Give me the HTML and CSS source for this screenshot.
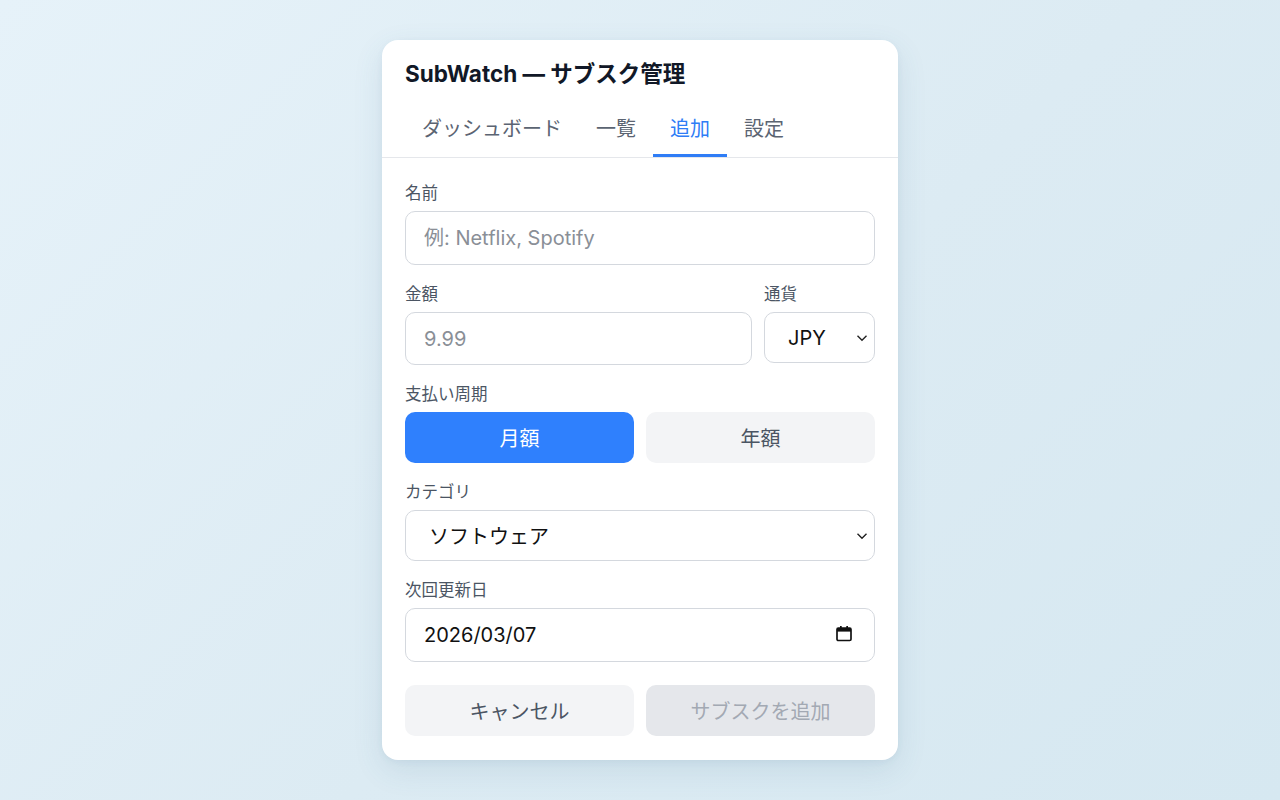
FILE: index.html
```html
<!DOCTYPE html>
<html lang="ja">
<head>
    <meta charset="UTF-8">
    <meta name="viewport" content="width=device-width, initial-scale=1.0">
    <title>SubWatch</title>
    <link rel="stylesheet" href="styles.css">
</head>
<body>
    <div class="card">
        <div class="head">
            <h1 class="title">SubWatch — サブスク管理</h1>
            <div class="tabs">
                <span class="tab">ダッシュボード</span>
                <span class="tab">一覧</span>
                <span class="tab active">追加</span>
                <span class="tab">設定</span>
            </div>
        </div>

        <form class="form">
            <div class="field">
                <label class="label">名前</label>
                <input class="input" type="text" placeholder="例: Netflix, Spotify">
            </div>

            <div class="row">
                <div class="field grow">
                    <label class="label">金額</label>
                    <input class="input" type="text" placeholder="9.99">
                </div>
                <div class="field currency">
                    <label class="label">通貨</label>
                    <div class="select-wrap">
                        <div class="select small">JPY</div>
                        <svg class="chev" width="12" height="8" viewBox="0 0 12 8"><path d="M1.5 1.8 6 6.2l4.5-4.4" fill="none" stroke="#222" stroke-width="1.4"/></svg>
                    </div>
                </div>
            </div>

            <div class="field">
                <label class="label">支払い周期</label>
                <div class="toggle">
                    <button type="button" class="tbtn on">月額</button>
                    <button type="button" class="tbtn">年額</button>
                </div>
            </div>

            <div class="field">
                <label class="label">カテゴリ</label>
                <div class="select-wrap">
                    <div class="select">ソフトウェア</div>
                    <svg class="chev" width="12" height="8" viewBox="0 0 12 8"><path d="M1.5 1.8 6 6.2l4.5-4.4" fill="none" stroke="#222" stroke-width="1.4"/></svg>
                </div>
            </div>

            <div class="field">
                <label class="label">次回更新日</label>
                <div class="select-wrap">
                    <input class="input date" type="text" value="2026/03/07">
                    <svg class="cal" width="18" height="18" viewBox="0 0 18 18">
                        <rect x="2" y="3.2" width="14" height="12.3" rx="1.3" fill="none" stroke="#111" stroke-width="1.7"/>
                        <rect x="2" y="3.2" width="14" height="3.4" fill="#111"/>
                        <rect x="5" y="1" width="1.7" height="3" fill="#111"/>
                        <rect x="11.3" y="1" width="1.7" height="3" fill="#111"/>
                    </svg>
                </div>
            </div>

            <div class="actions">
                <button type="button" class="btn cancel">キャンセル</button>
                <button type="button" class="btn submit" disabled>サブスクを追加</button>
            </div>
        </form>
    </div>
</body>
</html>
```

FILE: styles.css
```css
* {
    box-sizing: border-box;
}

body {
    margin: 0;
    height: 800px;
    background: linear-gradient(135deg, #e6f2f9 0%, #dcebf3 55%, #d6e8f1 100%);
    font-family: "Inter", "Noto Sans CJK JP", sans-serif;
    padding-top: 40px;
}

.card {
    width: 516px;
    margin: 0 auto;
    background: #ffffff;
    border-radius: 16px;
    box-shadow: 0 10px 30px rgba(60, 110, 140, 0.12), 0 2px 6px rgba(60, 110, 140, 0.06);
    overflow: hidden;
}

.head {
    padding: 20px 23px 0;
    border-bottom: 1px solid #e5e7eb;
}

.title {
    margin: 0;
    font-size: 22.5px;
    line-height: 28px;
    font-weight: 700;
    color: #111827;
}

.tabs {
    display: flex;
    margin-top: 14px;
}

.tab {
    padding: 13px 17px 11px;
    font-size: 20px;
    line-height: 28px;
    color: #5b6472;
    border-bottom: 3px solid transparent;
}

.tab.active {
    color: #2f7df6;
    border-bottom-color: #2f7df6;
}

.form {
    padding: 25px 23px 24px;
}

.field {
    margin-bottom: 19px;
}

.row .field {
    margin-bottom: 0;
}

.row {
    display: flex;
    gap: 12px;
    margin-bottom: 19px;
}

.label {
    display: block;
    font-size: 16.5px;
    line-height: 20px;
    color: #4b5563;
    margin-bottom: 8px;
}

.input {
    display: block;
    width: 100%;
    height: 54px;
    padding: 0 18px;
    border: 1.5px solid #d4d8de;
    border-radius: 10px;
    font-family: inherit;
    font-size: 20px;
    color: #111;
    background: #fff;
    outline: none;
}

.input::placeholder {
    color: #8a8f97;
}

.row .input {
    height: 53px;
}

.grow {
    flex: 1;
}

.currency {
    width: 111px;
}

.select-wrap {
    position: relative;
}

.select {
    height: 51px;
    display: flex;
    align-items: center;
    padding: 0 23px;
    border: 1.5px solid #d4d8de;
    border-radius: 10px;
    font-size: 20px;
    color: #111;
    background: #fff;
}

.chev {
    position: absolute;
    right: 7px;
    top: 22px;
}

.cal {
    position: absolute;
    right: 22px;
    top: 17px;
}

.toggle {
    display: flex;
    gap: 12px;
}

.tbtn {
    flex: 1;
    height: 51px;
    border: 0;
    border-radius: 10px;
    background: #f3f4f6;
    color: #4b5563;
    font-family: inherit;
    font-size: 20px;
}

.tbtn.on {
    background: #2f80fd;
    color: #ffffff;
}

.date {
    height: 54px;
}

.actions {
    display: flex;
    gap: 12px;
    margin-top: 23px;
}

.btn {
    flex: 1;
    height: 51px;
    border: 0;
    border-radius: 10px;
    font-family: inherit;
    font-size: 20px;
}

.cancel {
    background: #f3f4f6;
    color: #4b5563;
}

.submit {
    background: #e5e7eb;
    color: #a3a9b3;
}
```
